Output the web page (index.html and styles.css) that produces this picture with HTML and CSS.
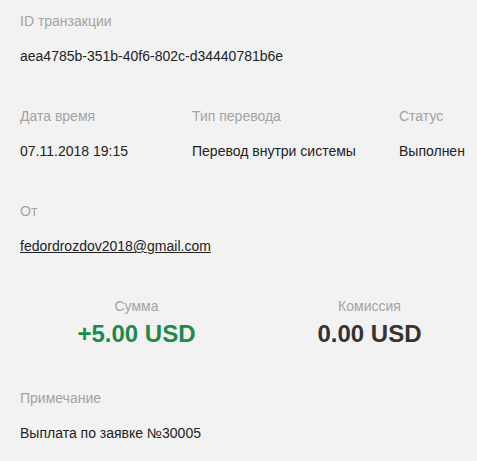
FILE: index.html
```html
<html>
    <head>
        <title>Транзакция</title>
        <meta charset="UTF-8" />
        <link rel="stylesheet" href="styles.css">
    </head>
    <body>
        <div class="details">
            <div class="field">
                <div class="label">ID транзакции</div>
                <div class="value">aea4785b-351b-40f6-802c-d34440781b6e</div>
            </div>
            <div class="field row">
                <div class="col">
                    <div class="label">Дата время</div>
                    <div class="value">07.11.2018 19:15</div>
                </div>
                <div class="col">
                    <div class="label">Тип перевода</div>
                    <div class="value">Перевод внутри системы</div>
                </div>
                <div class="col">
                    <div class="label">Статус</div>
                    <div class="value">Выполнен</div>
                </div>
            </div>
            <div class="field">
                <div class="label">От</div>
                <div class="value"><a class="link" href="#">fedordrozdov2018@gmail.com</a></div>
            </div>
            <div class="field amounts">
                <div class="amount">
                    <div class="label">Сумма</div>
                    <div class="sum income">+5.00 USD</div>
                </div>
                <div class="amount">
                    <div class="label">Комиссия</div>
                    <div class="sum">0.00 USD</div>
                </div>
            </div>
            <div class="field">
                <div class="label">Примечание</div>
                <div class="value">Выплата по заявке №30005</div>
            </div>
        </div>
    </body>
</html>
```

FILE: styles.css
```css
html {
    overflow: hidden;
}
body {
    margin: 0;
    background: #f2f2f2;
    color: #222;
    font-family: "Liberation Sans", Arial, sans-serif;
    font-size: 14px;
    line-height: 20px;
}
.details {
    padding: 11px 0 0 20px;
}
.field {
    margin-bottom: 40px;
}
.field:last-child {
    margin-bottom: 0;
}
.label {
    color: #a3a3a3;
}
.value {
    margin-top: 15px;
}
.link {
    color: #222;
    text-decoration: underline;
}

/* three columns: date, type, status */
.row {
    display: grid;
    grid-template-columns: 172px 207px auto;
}

/* sum and fee, centered in two halves */
.amounts {
    display: grid;
    grid-template-columns: 233px 233px;
    margin-bottom: 42px;
}
.amount {
    text-align: center;
}
.sum {
    margin-top: 6px;
    font-size: 24px;
    line-height: 24px;
    font-weight: bold;
    color: #333;
}
.sum.income {
    color: #1d8a4c;
}
```
